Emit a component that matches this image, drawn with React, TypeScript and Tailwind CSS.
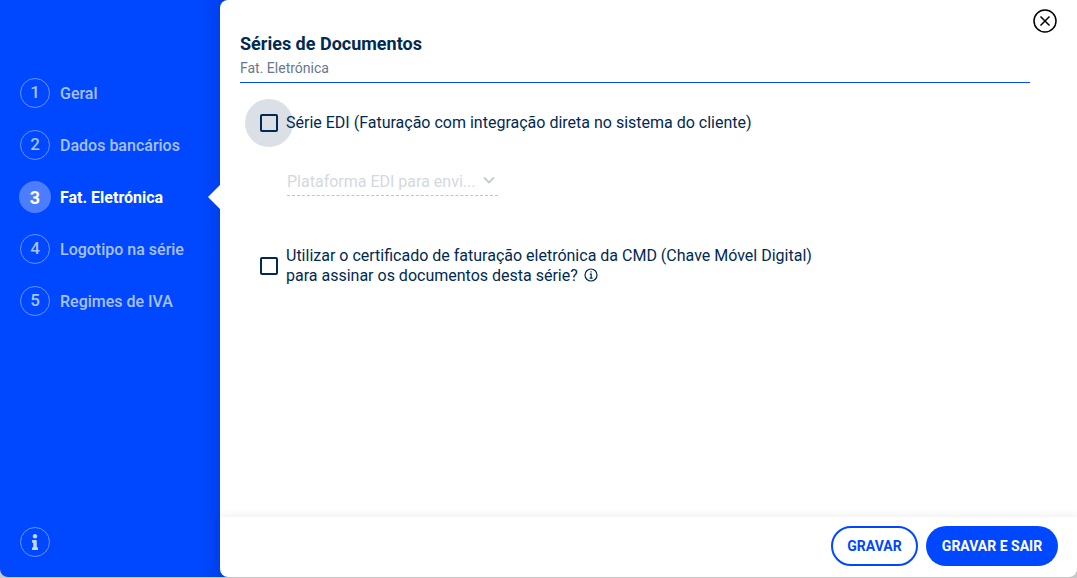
import { FaInfo } from "react-icons/fa";

const steps = [
  { n: 1, label: "Geral" },
  { n: 2, label: "Dados bancários" },
  { n: 3, label: "Fat. Eletrónica", active: true },
  { n: 4, label: "Logotipo na série" },
  { n: 5, label: "Regimes de IVA" },
];

function StepItem({ n, label, active }: { n: number; label: string; active?: boolean }) {
  return (
    <div className="relative flex h-[52px] items-center pl-[20px]">
      {active ? (
        <>
          <div className="-ml-[1px] mr-[9px] flex h-[32px] w-[32px] items-center justify-center rounded-full bg-[#4d7dff] text-[18px] font-bold text-white">
            {n}
          </div>
          <span className="pt-[2px] text-[16px] font-bold text-white">{label}</span>
          <div className="absolute right-0 top-[14px] h-0 w-0 border-y-[12px] border-r-[12px] border-y-transparent border-r-white" />
        </>
      ) : (
        <>
          <div className="mr-[10px] flex h-[30px] w-[30px] items-center justify-center rounded-full border border-[#6b93ff] pb-[1px] text-[17px] font-medium text-[#a9c1ff]">
            {n}
          </div>
          <span className="pt-[2px] text-[16px] font-medium text-[#a9c1ff]">{label}</span>
        </>
      )}
    </div>
  );
}

function Checkbox() {
  return <div className="h-[18px] w-[18px] shrink-0 rounded-[2px] border-2 border-[#012a52]" />;
}

export default function App() {
  return (
    <div
      className="flex h-[578px] w-[1077px] overflow-hidden bg-[#c9c9c9] pb-[1px] text-[#012a52]"
      style={{ fontFamily: 'Roboto, "Noto Sans", sans-serif' }}
    >
      <aside className="flex w-[228px] shrink-0 flex-col justify-between rounded-bl-[8px] bg-[#0048ff] bg-gradient-to-r from-[#0048ff] from-[88%] to-[#003ee6] pb-[20px] pr-[8px] pt-[67px]">
        <nav>
          {steps.map((s) => (
            <StepItem key={s.n} n={s.n} label={s.label} active={s.active} />
          ))}
        </nav>
        <div className="ml-[20px] flex h-[30px] w-[30px] items-center justify-center rounded-full border border-[#6b93ff] text-[#c3d4ff]">
          <FaInfo size={16} />
        </div>
      </aside>

      <main className="relative -ml-[8px] flex flex-1 flex-col rounded-b-[8px] rounded-tl-[8px] bg-white">
        <button className="absolute right-[20px] top-[9px] text-black">
          <svg width="24" height="24" viewBox="0 0 24 24" fill="none" stroke="currentColor">
            <circle cx="12" cy="12" r="11" strokeWidth="1.5" />
            <path d="M7.5 7.5l9 9M16.5 7.5l-9 9" strokeWidth="1.5" />
          </svg>
        </button>

        <div className="flex-1 pl-[20px] pr-[47px] pt-[33px]">
          <header className="border-b border-b-[#0048ff] pb-[5px]">
            <h1 className="text-[18px] font-bold leading-[22px]">Séries de Documentos</h1>
            <p className="mt-[4px] text-[14px] leading-[18px] text-[#66788f]">Fat. Eletrónica</p>
          </header>

          <label className="mt-[16px] flex h-[48px] items-center pl-[5px]">
            <div className="mr-[2px] flex h-[48px] w-[48px] shrink-0 items-center justify-center rounded-full bg-[#dae0e5]">
              <Checkbox />
            </div>
            <span className="relative -ml-[9px] text-[16px]">
              Série EDI (Faturação com integração direta no sistema do cliente)
            </span>
          </label>

          <div className="ml-[47px] mt-[23px] flex h-[26px] w-[211px] items-center justify-between border-b border-dashed border-[#bcc5cf] pb-[2px] pr-[2px]">
            <span className="text-[16px] text-[#d3d9df]">Plataforma EDI para envi...</span>
            <svg width="12" height="8" viewBox="0 0 12 8" fill="none" stroke="#c3cbd4" strokeWidth="1.8" className="mb-[3px] mr-[1px]">
              <path d="M1 1.5l5 5 5-5" />
            </svg>
          </div>

          <label className="ml-[20px] mt-[49px] flex items-center">
            <Checkbox />
            <span className="ml-[8px] pt-[1px] text-[16px] leading-[20px]">
              Utilizar o certificado de faturação eletrónica da CMD (Chave Móvel Digital)
              <br />
              para assinar os documentos desta série?
              <svg width="14" height="14" viewBox="0 0 14 14" fill="none" stroke="currentColor" className="ml-[6px] inline-block align-[-1px]">
                <circle cx="7" cy="7" r="6" strokeWidth="1.2" />
                <path d="M7 3.2v1.3M5.8 6.2H7.2v4M5.6 10.2h3" strokeWidth="1.2" />
              </svg>
            </span>
          </label>
        </div>

        <footer className="flex h-[60px] items-center justify-end gap-[8px] rounded-br-[8px] pb-[2px] pr-[19px] shadow-[0_-2px_8px_rgba(0,0,0,0.06)]">
          <button className="h-[40px] w-[87px] rounded-full border-2 border-[#0048ff] text-[14px] font-bold text-[#0048ff]">
            GRAVAR
          </button>
          <button className="h-[40px] w-[132px] rounded-full bg-[#0048ff] text-[14px] font-bold text-white">
            GRAVAR E SAIR
          </button>
        </footer>
      </main>
    </div>
  );
}
